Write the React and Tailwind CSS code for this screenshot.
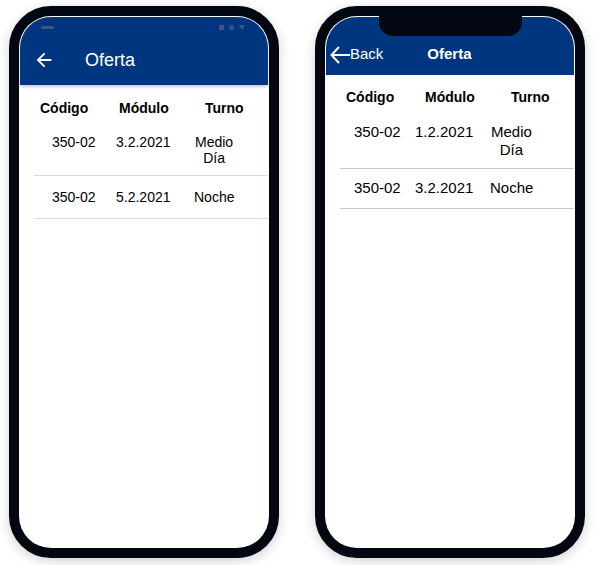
import React from "react";

const font = { fontFamily: '"Liberation Sans", Arial, sans-serif' };

function BackArrow() {
  return (
    <svg width="22" height="22" viewBox="0 0 24 24" fill="white">
      <path d="M20 11H7.83l5.59-5.59L12 4l-8 8 8 8 1.41-1.41L7.83 13H20v-2z" />
    </svg>
  );
}

function ThinArrow() {
  return (
    <svg width="20" height="18" viewBox="0 0 20 18" fill="none" stroke="white" strokeWidth="2">
      <path d="M9 1 L1.5 9 L9 17" />
      <path d="M1.5 9 H20" />
    </svg>
  );
}

function AndroidPhone() {
  return (
    <div className="w-[270px] h-[552px] rounded-[42px] border-[10px] border-[#030712] bg-[#030712] shadow-[0_3px_12px_rgba(0,0,0,0.18)]">
      <div className="h-full rounded-[32px] bg-white p-px overflow-hidden">
        <div className="h-[68px] rounded-t-[31px] bg-[#003680] flex flex-col shadow-[0_2px_3px_rgba(0,0,0,0.2)]">
          <div className="h-[20px] flex items-center justify-between pl-[21px] pr-[23px]">
            <div className="w-[13px] h-[3px] rounded-full bg-[#3b5686]" />
            <div className="flex items-center gap-[5px]">
              <div className="w-[5px] h-[5px] bg-[#3b5686]" />
              <div className="w-[5px] h-[5px] rounded-full bg-[#3b5686]" />
              <div className="w-0 h-0 border-l-[3px] border-r-[3px] border-t-[5px] border-l-transparent border-r-transparent border-t-[#3b5686]" />
            </div>
          </div>
          <div className="h-[44px] mt-px flex items-center pl-[13px]">
            <BackArrow />
            <span className="ml-[30px] text-[18px] text-white">Oferta</span>
          </div>
        </div>

        <div className="ml-[14px] text-black">
          <div className="pt-[13px] flex text-[14px] leading-[20px] font-bold">
            <span className="ml-[6px] w-[79px]">Código</span>
            <span className="w-[86px]">Módulo</span>
            <span>Turno</span>
          </div>
          <div className="mt-[16px] pb-[9px] border-b border-[#dcdcdc] flex text-[14px] leading-[16px]">
            <span className="ml-[18px] w-[64px]">350-02</span>
            <span className="w-[79px]">3.2.2021</span>
            <span className="text-center">Medio<br />Día</span>
          </div>
          <div className="pt-[13px] pb-[13px] border-b border-[#dcdcdc] flex text-[14px] leading-[16px]">
            <span className="ml-[18px] w-[64px]">350-02</span>
            <span className="w-[78px]">5.2.2021</span>
            <span>Noche</span>
          </div>
        </div>
      </div>
    </div>
  );
}

function IPhone() {
  return (
    <div className="relative w-[270px] h-[552px] rounded-[42px] border-[10px] border-[#030712] bg-[#030712] shadow-[0_3px_12px_rgba(0,0,0,0.18)]">
      <div className="absolute top-0 left-[54px] w-[143px] h-[20px] rounded-b-[14px] bg-[#030712] z-10" />
      <div className="h-full rounded-[32px] bg-white p-px overflow-hidden">
        <div className="h-[58px] rounded-t-[31px] bg-[#003680] pt-[17px]">
          <div className="h-[41px] flex items-center pl-[4px]">
            <ThinArrow />
            <span className="text-[15px] text-white">Back</span>
            <span className="ml-[44px] text-[15px] font-bold text-white">Oferta</span>
          </div>
        </div>

        <div className="ml-[14px] text-black">
          <div className="pt-[12px] flex text-[14px] leading-[20px] font-bold">
            <span className="ml-[6px] w-[79px]">Código</span>
            <span className="w-[86px]">Módulo</span>
            <span>Turno</span>
          </div>
          <div className="mt-[16px] pb-[9px] border-b border-[#c8c8c8] flex text-[15px] leading-[18px]">
            <span className="ml-[14px] w-[61px]">350-02</span>
            <span className="w-[76px]">1.2.2021</span>
            <span className="text-center">Medio<br />Día</span>
          </div>
          <div className="pt-[10px] pb-[11px] border-b border-[#c8c8c8] flex text-[15px] leading-[18px]">
            <span className="ml-[14px] w-[61px]">350-02</span>
            <span className="w-[75px]">3.2.2021</span>
            <span>Noche</span>
          </div>
        </div>
      </div>
    </div>
  );
}

export default function App() {
  return (
    <div className="w-[597px] h-[565px] bg-white flex pl-[9px] pt-[6px] gap-[36px]" style={font}>
      <AndroidPhone />
      <IPhone />
    </div>
  );
}
